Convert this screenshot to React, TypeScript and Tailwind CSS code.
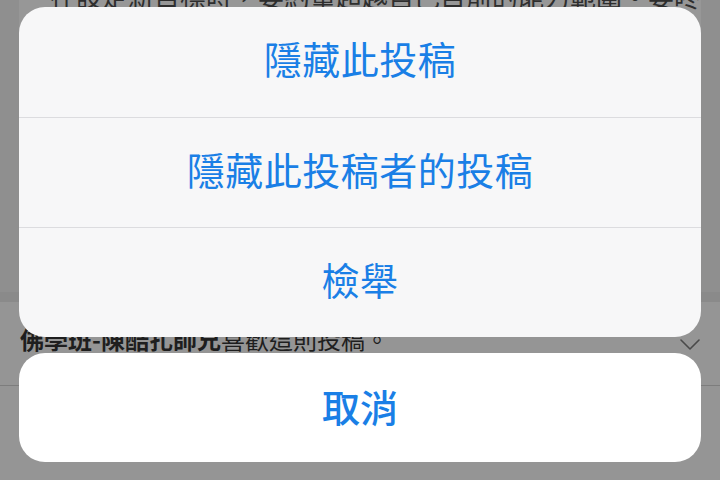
import React from "react";

const font = { fontFamily: '"Noto Sans CJK TC", "Noto Sans", sans-serif' };

type SheetAction = {
  id: string;
  label: string;
};

const actions: SheetAction[] = [
  { id: "hide-post", label: "隱藏此投稿" },
  { id: "hide-author", label: "隱藏此投稿者的投稿" },
  { id: "report", label: "檢舉" },
];

function Chevron() {
  return (
    <svg width="20" height="12" viewBox="0 0 20 12" fill="none" className="mt-[12px]">
      <path d="M1 1l9 9 9-9" stroke="#4a4a4a" strokeWidth="1.6" strokeLinecap="round" strokeLinejoin="round" />
    </svg>
  );
}

// dimmed feed behind the sheet
function FeedBackdrop() {
  return (
    <div className="flex flex-col h-full">
      <div className="mx-[19px] h-[292px] bg-[#979797] overflow-hidden">
        <p className="-mt-[22px] pl-[31px] text-[26px] leading-[36px] text-[#2e2e2e] whitespace-nowrap">
          在設定新目標時，要約量超越自己目前的能力範圍。要咚
        </p>
      </div>
      <div className="h-[10px] bg-[#8a8a8a]" />
      <div className="flex items-center justify-between h-[84px] pl-[20px] pr-[20px] pb-[10px] bg-[#959595] border-b border-[#7d7d7d]">
        <p className="text-[24px] text-[#1e1e1e] whitespace-nowrap">
          <span className="font-bold">佛學班-陳酷扎師兄</span>喜歡這則投稿。
        </p>
        <Chevron />
      </div>
      <div className="flex-1 bg-[#959595]" />
    </div>
  );
}

export default function App() {
  return (
    <div className="relative w-[720px] h-[480px] overflow-hidden bg-[#8f8f8f]" style={font}>
      <FeedBackdrop />
      <div className="absolute inset-0 flex flex-col gap-[16px] px-[19px] pt-[7px]">
        <div className="flex flex-col rounded-[26px] bg-[#f7f7f8] overflow-hidden">
          {actions.map((action, i) => (
            <button
              key={action.id}
              className={`h-[110px] pb-[9px] flex items-center justify-center text-[38px] tracking-[0.5px] text-[#1a7fe6] ${i > 0 ? "border-t border-[#dcdcdf]" : ""}`}
            >
              {action.label}
            </button>
          ))}
        </div>
        <button className="h-[109px] pb-[4px] flex items-center justify-center rounded-[26px] bg-white text-[38px] font-medium text-[#1a7fe6]">
          取消
        </button>
      </div>
    </div>
  );
}
